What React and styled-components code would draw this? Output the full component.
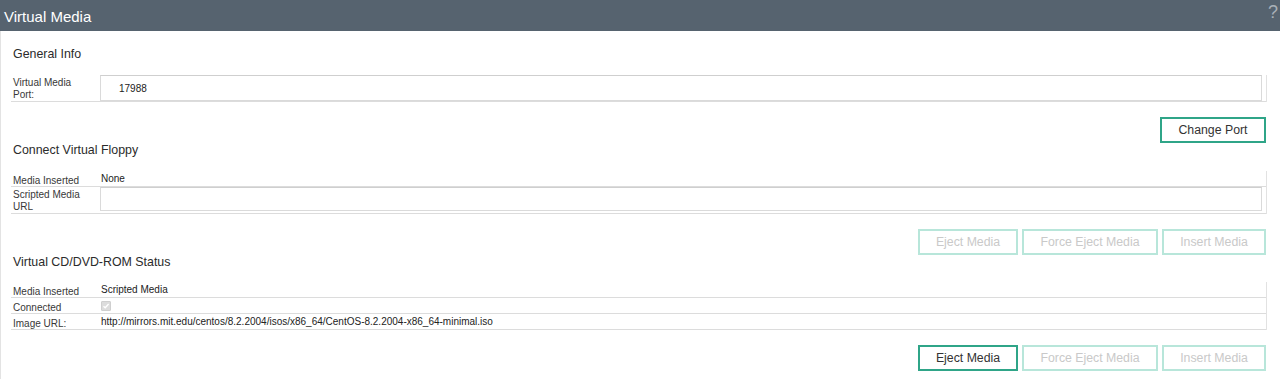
import React from "react";
import styled, { createGlobalStyle } from "styled-components";

const Global = createGlobalStyle`
  html, body { margin: 0; padding: 0; background: #fff; }
  body { font-family: "Liberation Sans", Arial, sans-serif; color: #333; }
  * { box-sizing: border-box; }
`;

const Page = styled.div`
  width: 1280px;
  min-height: 379px;
  background: #fff;
`;

const Header = styled.header`
  height: 31px;
  background: #56636f;
  display: flex;
  justify-content: space-between;
  align-items: center;
  padding: 0 2px 0 4px;
`;

const HeaderTitle = styled.h1`
  margin: 2px 0 0;
  font-size: 15px;
  font-weight: normal;
  color: #fff;
`;

const Help = styled.span`
  align-self: flex-start;
  margin-top: 2px;
  font-size: 18px;
  line-height: 20px;
  color: #a9b1b8;
`;

const Body = styled.main`
  border-left: 1px solid #e3e3e3;
  padding: 16px 14px 9px 10px;
`;

const SectionTitle = styled.h2`
  margin: 0 0 ${(p) => p.$mb || 14}px 2px;
  font-size: 12.4px;
  line-height: 14px;
  font-weight: normal;
  color: #2b2b2b;
`;

const Table = styled.div`
  margin-right: -1px;
  border-right: 1px solid #e2e2e2;
`;

const Row = styled.div`
  display: grid;
  grid-template-columns: 89px 1fr;
  border-bottom: 1px solid #dcdcdc;
  min-height: ${(p) => p.$h || 15}px;
`;

const Label = styled.div`
  font-size: 10px;
  line-height: ${(p) => (p.$tall ? 12 : 11)}px;
  padding: ${(p) => (p.$tall ? "2px 0 0 2px" : "4px 0 0 2px")};
  color: #383838;
`;

const Value = styled.div`
  font-size: 10px;
  line-height: 11px;
  padding: ${(p) => (p.$pad ? "2px 0 0 1px" : "0")};
  padding-right: 4px;
  color: #222;
`;

const TextInput = styled.input`
  display: block;
  width: 100%;
  height: ${(p) => p.$h || 26}px;
  border: 1px solid #dadada;
  border-top-color: #cfcfcf;
  padding: 0 0 0 18px;
  font-family: "Liberation Sans", Arial, sans-serif;
  font-size: 10px;
  color: #222;
  background: #fff;
  outline: none;
`;

const CheckBox = styled.span`
  display: inline-block;
  width: 10px;
  height: 10px;
  margin-top: 1px;
  background: #dcdcdc;
  border: 1px solid #cfcfcf;
  border-radius: 1px;
  position: relative;
  svg { position: absolute; left: 0; top: 0; }
`;

const ButtonBar = styled.div`
  display: flex;
  justify-content: flex-end;
  gap: 4px;
  margin-top: ${(p) => p.$mt || 17}px;
`;

const Button = styled.button`
  height: 26px;
  width: ${(p) => p.$w}px;
  padding: 0;
  background: #fff;
  border: 2px solid ${(p) => (p.disabled ? "#b8e6da" : "#2fa588")};
  color: ${(p) => (p.disabled ? "#c9c9c9" : "#333")};
  font-family: "Liberation Sans", Arial, sans-serif;
  font-size: 12.3px;
  cursor: ${(p) => (p.disabled ? "default" : "pointer")};
`;

export default function App() {
  return (
    <Page>
      <Global />
      <Header>
        <HeaderTitle>Virtual Media</HeaderTitle>
        <Help>?</Help>
      </Header>
      <Body>
        <SectionTitle>General Info</SectionTitle>
        <Table>
          <Row $h={27}>
            <Label $tall>
              Virtual Media
              <br />
              Port:
            </Label>
            <Value>
              <TextInput defaultValue="17988" readOnly />
            </Value>
          </Row>
        </Table>
        <ButtonBar $mt={15}>
          <Button $w={106}>Change Port</Button>
        </ButtonBar>

        <SectionTitle>Connect Virtual Floppy</SectionTitle>
        <Table>
          <Row $h={16}>
            <Label>Media Inserted</Label>
            <Value $pad>None</Value>
          </Row>
          <Row $h={25}>
            <Label $tall>
              Scripted Media
              <br />
              URL
            </Label>
            <Value>
              <TextInput $h={24} defaultValue="" readOnly />
            </Value>
          </Row>
        </Table>
        <ButtonBar $mt={15}>
          <Button $w={100} disabled>Eject Media</Button>
          <Button $w={136} disabled>Force Eject Media</Button>
          <Button $w={104} disabled>Insert Media</Button>
        </ButtonBar>

        <SectionTitle $mb={13}>Virtual CD/DVD-ROM Status</SectionTitle>
        <Table>
          <Row $h={15}>
            <Label>Media Inserted</Label>
            <Value $pad>Scripted Media</Value>
          </Row>
          <Row $h={16}>
            <Label>Connected</Label>
            <Value $pad>
              <CheckBox>
                <svg width="8" height="8" viewBox="0 0 8 8">
                  <path d="M1.5 4.2 L3.2 5.8 L6.6 2" fill="none" stroke="#fff" strokeWidth="1.3" />
                </svg>
              </CheckBox>
            </Value>
          </Row>
          <Row $h={15}>
            <Label>Image URL:</Label>
            <Value $pad>http://mirrors.mit.edu/centos/8.2.2004/isos/x86_64/CentOS-8.2.2004-x86_64-minimal.iso</Value>
          </Row>
        </Table>
        <ButtonBar $mt={15}>
          <Button $w={100}>Eject Media</Button>
          <Button $w={136} disabled>Force Eject Media</Button>
          <Button $w={104} disabled>Insert Media</Button>
        </ButtonBar>
      </Body>
    </Page>
  );
}
